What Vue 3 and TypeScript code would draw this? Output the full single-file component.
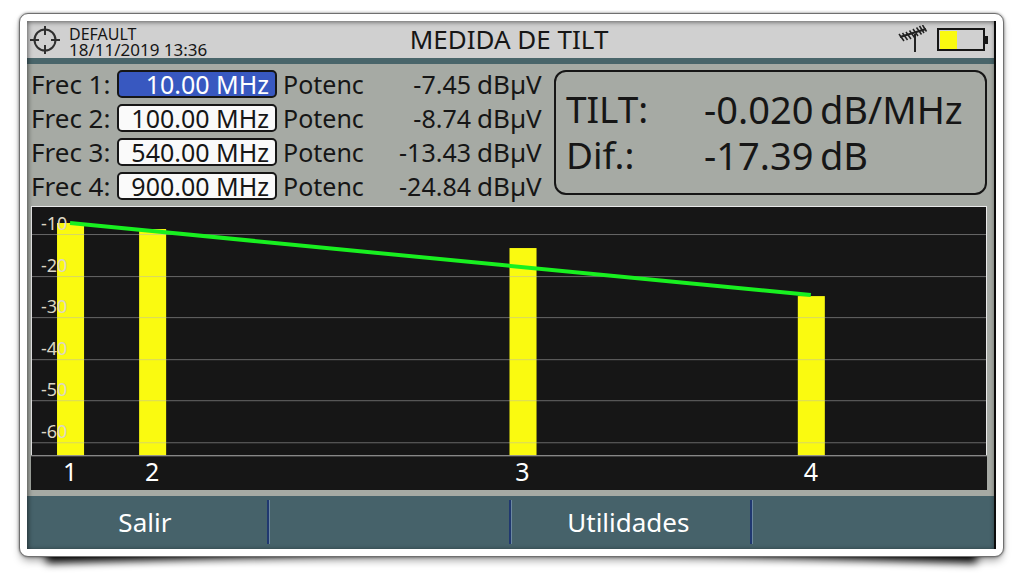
<script setup lang="ts">
interface Measurement {
  id: number
  freq: string
  level: number
  x: number
}

const measurements: Measurement[] = [
  { id: 1, freq: '10.00 MHz', level: -7.45, x: 39 },
  { id: 2, freq: '100.00 MHz', level: -8.74, x: 121 },
  { id: 3, freq: '540.00 MHz', level: -13.43, x: 491 },
  { id: 4, freq: '900.00 MHz', level: -24.84, x: 779 },
]

const results = [
  { name: 'TILT:', value: '-0.020', unit: 'dB/MHz' },
  { name: 'Dif.:', value: '-17.39', unit: 'dB' },
]

const softkeys = ['Salir', '', 'Utilidades', '']
const gridLevels = [-10, -20, -30, -40, -50, -60]
const plotBottom = 249

const yFor = (level: number): number => Math.round(28 + (-10 - level) * 4.16)
</script>

<template>
  <main class="frame">
    <div class="screen">
      <header class="topbar">
        <div class="profile">
          <svg class="target" viewBox="0 0 32 32" aria-hidden="true">
            <circle cx="16" cy="16" r="10.5" />
            <path d="M16 2v9M16 21v9M1 16h9M22 16h9" />
          </svg>
          <div class="profile-text">
            <div>DEFAULT</div>
            <div class="date">18/11/2019 13:36</div>
          </div>
        </div>
        <h1>MEDIDA DE TILT</h1>
        <div class="status">
          <svg class="antenna" viewBox="0 0 30 30" aria-hidden="true">
            <path class="mast" d="M17 9v18" />
            <path class="boom" d="M2 12L28 4" />
            <path class="rods" d="M1 9l5 7M4.500 8l5 7M8 7l5 7M11.500 5.500l5 7M15 4l5 7M18.500 2.500l5 7M21.500 1l4.500 7M24.500 0l4 6.500" />
          </svg>
          <svg class="battery" viewBox="0 0 52 24" aria-hidden="true">
            <rect class="charge" x="3" y="3" width="17" height="18" />
            <rect class="case" x="1" y="1" width="46" height="21" />
            <rect class="tip" x="48" y="8" width="3" height="8" />
          </svg>
        </div>
      </header>

      <section class="content">
        <div class="readings">
          <div class="measurements">
            <div v-for="m in measurements" :key="m.id" class="row">
              <label :for="`freq-${m.id}`">Frec {{ m.id }}:</label>
              <input :id="`freq-${m.id}`" type="text" :value="m.freq" :class="{ selected: m.id === 1 }" />
              <span class="power">Potenc</span>
              <span class="level">{{ m.level.toFixed(2) }}</span>
              <span class="unit">dBµV</span>
            </div>
          </div>
          <dl class="results">
            <div v-for="r in results" :key="r.name" class="result">
              <dt>{{ r.name }}</dt>
              <dd>{{ r.value }}</dd>
              <dd>{{ r.unit }}</dd>
            </div>
          </dl>
        </div>

        <svg class="chart" viewBox="0 0 955 284" role="img" aria-label="TILT">
          <rect class="plot" width="955" height="284" />
          <rect
            v-for="m in measurements"
            :key="m.id"
            class="bar"
            :x="m.x - 13"
            :y="yFor(m.level)"
            width="27"
            :height="plotBottom - yFor(m.level)"
          />
          <g v-for="g in gridLevels" :key="g">
            <rect class="grid" x="1" :y="yFor(g)" width="953" height="1" />
            <text class="tick" x="10" :y="yFor(g) - 4">{{ g }}</text>
          </g>
          <path class="edge" d="M0.500 249V0.500H954.500V249" />
          <rect class="base" y="249" width="955" height="1" />
          <path class="trend" d="M39 17L121 25L779 89" />
          <text v-for="m in measurements" :key="m.id" class="mark" :x="m.x" y="275">{{ m.id }}</text>
        </svg>
      </section>

      <nav class="softkeys">
        <button v-for="(k, i) in softkeys" :key="i" type="button">{{ k }}</button>
      </nav>
    </div>
  </main>
</template>

<style>
body {
  margin: 0;
  background: #fff;
}
</style>

<style scoped>
.frame {
  position: relative;
  margin: 13px 20px 20px 19px;
  padding: 7px;
  border: 1px solid #707070;
  border-radius: 9px;
  background: #fff;
  box-shadow: 0 0 3px rgba(0, 0, 0, 0.5), 0 5px 9px -2px rgba(0, 0, 0, 0.4);
  font-family: "Noto Sans", "Open Sans", sans-serif;
  color: #161616;
}

.frame::before,
.frame::after {
  content: "";
  position: absolute;
  z-index: -1;
  bottom: 2px;
  width: 44%;
  height: 16px;
  box-shadow: 0 9px 8px rgba(0, 0, 0, 0.95);
}

.frame::before {
  left: 26px;
  transform: rotate(-2deg);
  transform-origin: left bottom;
}

.frame::after {
  right: 26px;
  transform: rotate(2deg);
  transform-origin: right bottom;
}

.screen {
  position: relative;
  border-right: 2px solid #0c0c0c;
  background: #a6aaa4;
}

.screen::after {
  content: "";
  position: absolute;
  inset: 0;
  pointer-events: none;
  box-shadow: inset 1px 1px 5px rgba(0, 0, 0, 0.55);
}

.topbar {
  display: grid;
  grid-template-columns: 1fr auto 1fr;
  align-items: center;
  height: 37px;
  padding: 0 5px 0 2px;
  border-bottom: 6px solid #49656a;
  background: #d0d0d0;
}

.profile {
  display: flex;
  align-items: center;
  gap: 8px;
}

.target {
  width: 32px;
  height: 32px;
  fill: none;
  stroke: #303030;
  stroke-width: 2;
}

.profile-text {
  padding-top: 4px;
  font-size: 16px;
  line-height: 16px;
}

.date {
  font-size: 17px;
}

h1 {
  margin: 0;
  padding-bottom: 2px;
  font-size: 26px;
  font-weight: 400;
  line-height: 34px;
}

.status {
  display: flex;
  justify-content: flex-end;
  align-items: center;
  gap: 9px;
}

.antenna {
  width: 30px;
  height: 30px;
  fill: none;
  stroke: #222;
}

.mast {
  stroke-width: 2;
}

.boom {
  stroke-width: 2;
}

.rods {
  stroke-width: 1.5;
}

.battery {
  width: 52px;
  height: 24px;
}

.charge {
  fill: #fafa10;
}

.case {
  fill: none;
  stroke: #161616;
  stroke-width: 2;
}

.tip {
  fill: #161616;
}

.content {
  padding: 6px 7px 6px 4px;
}

.readings {
  display: flex;
  align-items: flex-start;
  gap: 11px;
  margin-bottom: 6px;
}

.measurements {
  display: grid;
  gap: 6px;
}

.row {
  display: grid;
  grid-template-columns: 80px 160px 86px 96px 66px;
  column-gap: 6px;
  align-items: center;
  height: 28px;
  font-size: 25px;
  line-height: 26px;
  white-space: nowrap;
}

label,
.unit {
  font-size: 26px;
}

input {
  box-sizing: border-box;
  width: 100%;
  height: 28px;
  padding: 0 6px;
  border: 2px solid #161616;
  border-radius: 5px;
  background: #fafafa;
  color: #161616;
  font: inherit;
  line-height: 24px;
  text-align: right;
}

input.selected {
  background: #3858c0;
  color: #fff;
}

.level {
  text-align: right;
}

.results {
  flex: 1;
  box-sizing: border-box;
  margin: 0;
  padding: 14px 10px 15px;
  border: 2px solid #161616;
  border-radius: 12px;
  font-size: 37px;
  line-height: 46px;
}

.result {
  display: grid;
  grid-template-columns: 132px 110px 1fr;
  column-gap: 6px;
  white-space: nowrap;
}

dd {
  margin: 0;
  font-size: 38px;
}

.chart {
  display: block;
  width: 100%;
  height: auto;
}

.plot {
  fill: #161616;
}

.bar {
  fill: #fafa10;
}

.grid {
  fill: #b8b8b8;
  fill-opacity: 0.5;
}

.tick {
  fill: #dcd6c4;
  font-size: 18px;
}

.edge {
  fill: none;
  stroke: #e8e8e8;
}

.base {
  fill: #b0b0b0;
}

.trend {
  fill: none;
  stroke: #18f020;
  stroke-width: 4;
}

.mark {
  fill: #fff;
  font-size: 25px;
  text-anchor: middle;
}

.softkeys {
  display: grid;
  grid-template-columns: repeat(4, 1fr);
  padding: 4px 0 5px;
  background: #46626a;
}

button {
  height: 44px;
  padding: 0 4px 0 0;
  border: 0;
  border-right: 2px solid #203870;
  background: transparent;
  color: #fff;
  box-shadow: 1px 0 #6c88a0;
  font: inherit;
  font-size: 26px;
  line-height: 44px;
}

button:last-child {
  border-right: 0;
  box-shadow: none;
}
</style>
